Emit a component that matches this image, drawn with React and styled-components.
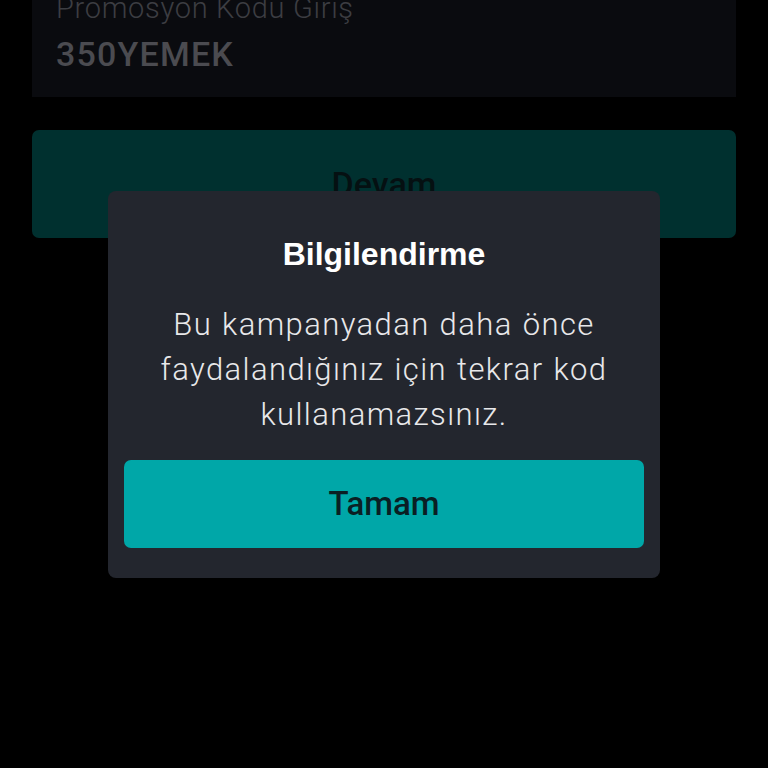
import React from "react";
import styled, { createGlobalStyle } from "styled-components";

const Global = createGlobalStyle`
  html, body { margin: 0; padding: 0; background: #000; }
  body { font-family: "Liberation Sans", Arial, sans-serif; overflow: hidden; }
  * { box-sizing: border-box; }
`;

const Page = styled.div`
  width: 768px;
  height: 768px;
  background: #000;
  padding: 0 32px;
  display: flex;
  flex-direction: column;
  gap: 33px;
  overflow: hidden;
`;

const PromoCard = styled.div`
  margin-top: -10px;
  background: #0a0b0f;
  padding: 0 24px 23px;
  display: flex;
  flex-direction: column;
  gap: 8px;
`;

const PromoLabel = styled.div`
  font-family: "Roboto", "Liberation Sans", sans-serif;
  font-weight: 300;
  font-size: 29px;
  line-height: 36px;
  letter-spacing: 0.7px;
  color: #3c3d42;
`;

const PromoValue = styled.div`
  font-family: "Roboto", "Liberation Sans", sans-serif;
  font-size: 34px;
  line-height: 40px;
  font-weight: 500;
  color: #4b4b50;
  letter-spacing: 1.2px;
`;

const ContinueButton = styled.button`
  height: 108px;
  border: none;
  border-radius: 7px;
  background: #00302f;
  color: #051012;
  font-family: "Roboto", "Liberation Sans", sans-serif;
  font-weight: 500;
  font-size: 34px;
  padding: 0;
`;

const Overlay = styled.div`
  position: fixed;
  inset: 0;
  display: flex;
  align-items: center;
  justify-content: center;
`;

const Dialog = styled.div`
  width: 552px;
  background: #23262e;
  border-radius: 8px;
  padding: 43px 16px 30px;
  display: flex;
  flex-direction: column;
  align-items: stretch;
`;

const Title = styled.div`
  font-size: 32px;
  line-height: 40px;
  font-weight: 700;
  color: #ffffff;
  text-align: center;
`;

const Message = styled.p`
  margin: 28px 0 23px;
  font-family: "Roboto", "Liberation Sans", sans-serif;
  font-weight: 300;
  font-size: 31px;
  line-height: 45px;
  letter-spacing: 1.4px;
  word-spacing: 1px;
  color: #e8e8ea;
  text-align: center;
`;

const OkButton = styled.button`
  height: 88px;
  border: none;
  border-radius: 7px;
  background: #00a7a8;
  color: #0a1f24;
  font-family: "Roboto", "Liberation Sans", sans-serif;
  font-weight: 500;
  font-size: 33px;
  padding: 0;
`;

export default function App() {
  return (
    <>
      <Global />
      <Page>
        <PromoCard>
          <PromoLabel>Promosyon Kodu Giriş</PromoLabel>
          <PromoValue>350YEMEK</PromoValue>
        </PromoCard>
        <ContinueButton>Devam</ContinueButton>
      </Page>
      <Overlay>
        <Dialog>
          <Title>Bilgilendirme</Title>
          <Message>
            Bu kampanyadan daha önce
            <br />
            faydalandığınız için tekrar kod
            <br />
            kullanamazsınız.
          </Message>
          <OkButton>Tamam</OkButton>
        </Dialog>
      </Overlay>
    </>
  );
}
